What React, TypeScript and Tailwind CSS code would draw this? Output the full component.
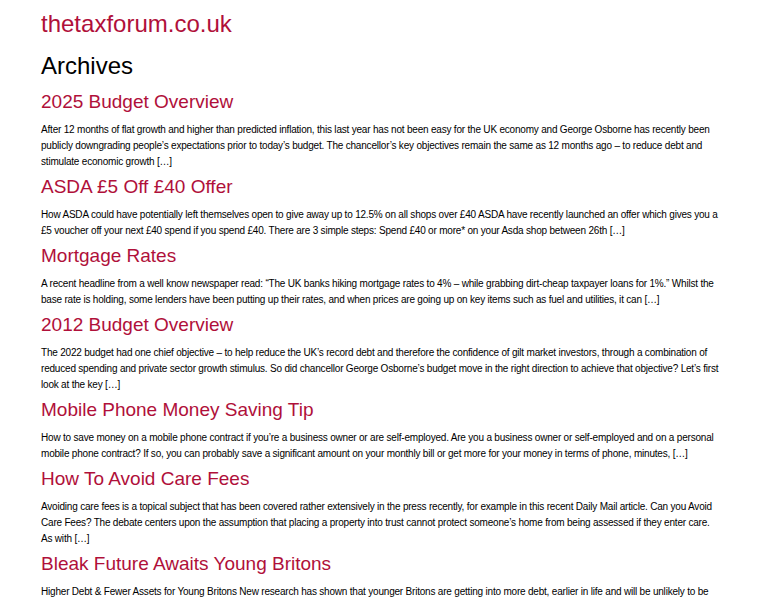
const posts = [
  {
    title: "2025 Budget Overview",
    excerpt:
      "After 12 months of flat growth and higher than predicted inflation, this last year has not been easy for the UK economy and George Osborne has recently been publicly downgrading people’s expectations prior to today’s budget. The chancellor’s key objectives remain the same as 12 months ago – to reduce debt and stimulate economic growth […]",
  },
  {
    title: "ASDA £5 Off £40 Offer",
    excerpt:
      "How ASDA could have potentially left themselves open to give away up to 12.5% on all shops over £40 ASDA have recently launched an offer which gives you a £5 voucher off your next £40 spend if you spend £40. There are 3 simple steps: Spend £40 or more* on your Asda shop between 26th […]",
  },
  {
    title: "Mortgage Rates",
    excerpt:
      "A recent headline from a well know newspaper read: “The UK banks hiking mortgage rates to 4% – while grabbing dirt-cheap taxpayer loans for 1%.” Whilst the base rate is holding, some lenders have been putting up their rates, and when prices are going up on key items such as fuel and utilities, it can […]",
  },
  {
    title: "2012 Budget Overview",
    excerpt:
      "The 2022 budget had one chief objective – to help reduce the UK’s record debt and therefore the confidence of gilt market investors, through a combination of reduced spending and private sector growth stimulus. So did chancellor George Osborne’s budget move in the right direction to achieve that objective? Let’s first look at the key […]",
  },
  {
    title: "Mobile Phone Money Saving Tip",
    excerpt:
      "How to save money on a mobile phone contract if you’re a business owner or are self-employed. Are you a business owner or self-employed and on a personal mobile phone contract? If so, you can probably save a significant amount on your monthly bill or get more for your money in terms of phone, minutes, […]",
  },
  {
    title: "How To Avoid Care Fees",
    excerpt:
      "Avoiding care fees is a topical subject that has been covered rather extensively in the press recently, for example in this recent Daily Mail article. Can you Avoid Care Fees? The debate centers upon the assumption that placing a property into trust cannot protect someone’s home from being assessed if they enter care. As with […]",
  },
  {
    title: "Bleak Future Awaits Young Britons",
    excerpt:
      "Higher Debt & Fewer Assets for Young Britons New research has shown that younger Britons are getting into more debt, earlier in life and will be unlikely to be able to own a home as their parents did, according to a new report published by the Resolution Foundation which looked at […]",
  },
];

export default function App() {
  return (
    <div className="min-h-screen bg-white font-['Liberation_Sans',Arial,sans-serif]">
      <div className="w-[719px] pl-[41px] pt-[10px] pb-10">
        <a href="#" className="block text-[24px] leading-[28px] text-[#b0103a]">
          thetaxforum.co.uk
        </a>
        <h1 className="mt-[14px] text-[24px] leading-[28px] text-black">Archives</h1>
        <div className="mt-[10px] flex flex-col gap-[5px]">
          {posts.map(p => (
            <article key={p.title}>
              <h2 className="text-[19px] leading-[24px] text-[#b0103a]">
                <a href="#">{p.title}</a>
              </h2>
              <p className="mt-[8px] text-[10px] leading-[16px] tracking-[-0.2px] text-black">
                {p.excerpt}
              </p>
            </article>
          ))}
        </div>
      </div>
    </div>
  );
}
